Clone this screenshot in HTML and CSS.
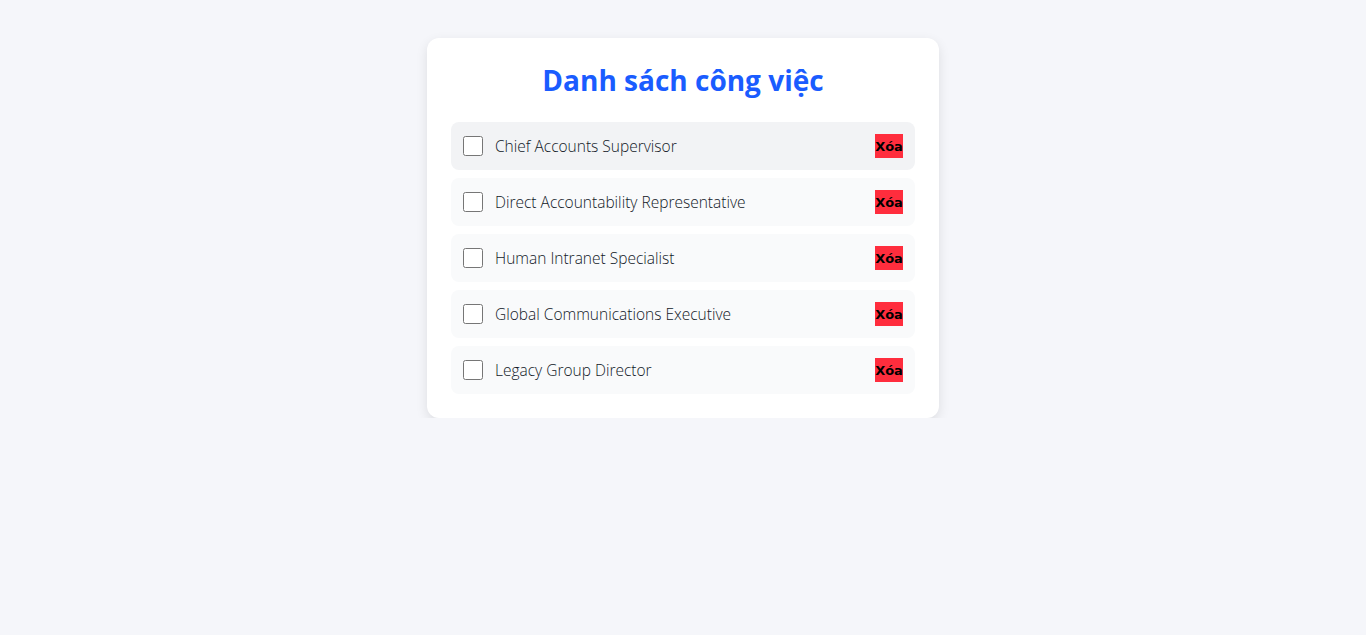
FILE: index.html
```html
<!DOCTYPE html>
<html lang="vi">
<head>
<meta charset="utf-8">
<title>Danh sách công việc</title>
<link rel="stylesheet" href="styles.css">
</head>
<body>
<main class="card">
  <h1 class="title">Danh sách công việc</h1>
  <ul class="list">
    <li class="item item-hover"><label class="item-label"><input type="checkbox" class="check"><span class="text">Chief Accounts Supervisor</span></label><button class="del">Xóa</button></li>
    <li class="item"><label class="item-label"><input type="checkbox" class="check"><span class="text">Direct Accountability Representative</span></label><button class="del">Xóa</button></li>
    <li class="item"><label class="item-label"><input type="checkbox" class="check"><span class="text">Human Intranet Specialist</span></label><button class="del">Xóa</button></li>
    <li class="item"><label class="item-label"><input type="checkbox" class="check"><span class="text">Global Communications Executive</span></label><button class="del">Xóa</button></li>
    <li class="item"><label class="item-label"><input type="checkbox" class="check"><span class="text">Legacy Group Director</span></label><button class="del">Xóa</button></li>
  </ul>
</main>
</body>
</html>
```

FILE: styles.css
```css
* { box-sizing: border-box; }
html, body { margin: 0; padding: 0; }
body {
  background: #f5f6fa;
  font-family: "Open Sans", "Noto Sans", sans-serif;
  color: #1f2937;
  padding-top: 38px;
}
.card {
  width: 512px;
  margin: 0 auto;
  background: #ffffff;
  border-radius: 12px;
  box-shadow: 0 4px 12px rgba(0, 0, 0, 0.1);
  padding: 24px;
}
.title {
  margin: 0 0 24px;
  text-align: center;
  color: #1a5cff;
  font-size: 28px;
  line-height: 36px;
  font-weight: 700;
}
.list {
  list-style: none;
  margin: 0;
  padding: 0;
  display: flex;
  flex-direction: column;
  gap: 8px;
}
.item {
  height: 48px;
  display: flex;
  align-items: center;
  justify-content: space-between;
  padding: 0 12px;
  background: #f9fafb;
  border-radius: 8px;
}
.item-hover { background: #f2f3f5; }
.item-label {
  display: flex;
  align-items: center;
  gap: 12px;
}
.check {
  width: 20px;
  height: 20px;
  margin: 0;
}
.text {
  font-size: 15.5px;
  font-weight: 300;
  color: #111827;
}
.del {
  border: none;
  padding: 0;
  height: 24px;
  width: 28px;
  background: #ff2d3d;
  color: #000;
  font-family: "DejaVu Sans", sans-serif;
  font-weight: 700;
  font-size: 13px;
  cursor: pointer;
}
```
